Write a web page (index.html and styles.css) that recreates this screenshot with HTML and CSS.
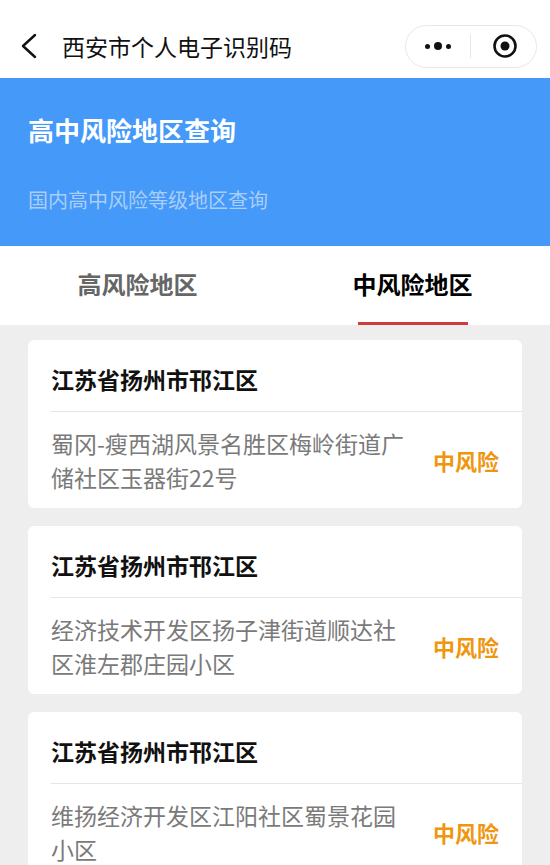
FILE: index.html
```html
<!DOCTYPE html>
<html lang="zh-CN">
<head>
    <meta charset="UTF-8">
    <meta name="viewport" content="width=device-width, initial-scale=1.0">
    <title>高中风险地区查询 - 西安市个人电子识别码</title>
    <link rel="stylesheet" href="styles.css">
</head>
<body>
    <!-- Mini program nav bar -->
    <div class="navbar">
        <svg class="back" width="20" height="30" viewBox="0 0 20 30">
            <polyline points="15,4 3,15 15,26" fill="none" stroke="#111" stroke-width="2.4" stroke-linecap="round" stroke-linejoin="round"/>
        </svg>
        <div class="nav-title">西安市个人电子识别码</div>
        <div class="capsule">
            <div class="more">
                <span class="dot"></span><span class="dot big"></span><span class="dot"></span>
            </div>
            <div class="capsule-line"></div>
            <svg class="close" width="26" height="26" viewBox="0 0 26 26">
                <circle cx="13" cy="13" r="10.5" fill="none" stroke="#111" stroke-width="2.6"/>
                <circle cx="13" cy="13" r="4.5" fill="#111"/>
            </svg>
        </div>
    </div>

    <!-- Header -->
    <div class="banner">
        <h1>高中风险地区查询</h1>
        <p>国内高中风险等级地区查询</p>
    </div>

    <!-- Tabs -->
    <div class="tabs">
        <div class="tab">高风险地区</div>
        <div class="tab active">中风险地区</div>
    </div>

    <!-- Area list -->
    <div class="list">
        <div class="card">
            <div class="card-title">江苏省扬州市邗江区</div>
            <div class="card-body">
                <div class="addr">蜀冈-瘦西湖风景名胜区梅岭街道广储社区玉器街22号</div>
                <div class="level">中风险</div>
            </div>
        </div>
        <div class="card">
            <div class="card-title">江苏省扬州市邗江区</div>
            <div class="card-body">
                <div class="addr">经济技术开发区扬子津街道顺达社区淮左郡庄园小区</div>
                <div class="level">中风险</div>
            </div>
        </div>
        <div class="card">
            <div class="card-title">江苏省扬州市邗江区</div>
            <div class="card-body">
                <div class="addr">维扬经济开发区江阳社区蜀景花园小区</div>
                <div class="level">中风险</div>
            </div>
        </div>
    </div>
</body>
</html>
```

FILE: styles.css
```css
body {
    margin: 0;
    padding: 0;
    font-family: "Noto Sans CJK SC", "Noto Sans", sans-serif;
    background-color: #eeeeee;
    overflow: hidden;
}

/* Nav bar */
.navbar {
    height: 78px;
    background-color: #fff;
    display: flex;
    align-items: center;
    padding: 14px 13px 0 20px;
    box-sizing: border-box;
}

.nav-title {
    flex: 1;
    margin-left: 22px;
    font-size: 23px;
    line-height: 30px;
    color: #111;
}

.capsule {
    width: 132px;
    height: 43px;
    box-sizing: border-box;
    border: 1px solid #e8e8e8;
    border-radius: 22px;
    display: flex;
    align-items: center;
}

.more {
    width: 64px;
    display: flex;
    align-items: center;
    justify-content: center;
    gap: 4px;
}

.dot {
    width: 5px;
    height: 5px;
    border-radius: 50%;
    background-color: #111;
}

.dot.big {
    width: 8px;
    height: 8px;
}

.capsule-line {
    width: 1px;
    height: 24px;
    background-color: #e6e6e6;
}

.close {
    margin-left: 21px;
}

/* Banner */
.banner {
    height: 168px;
    background-color: #4499f9;
    padding: 36px 28px 0;
    box-sizing: border-box;
}

.banner h1 {
    margin: 0;
    font-size: 26px;
    line-height: 32px;
    color: #fff;
    font-weight: bold;
}

.banner p {
    margin: 40px 0 0;
    font-size: 20px;
    line-height: 28px;
    color: #a9cef9;
}

/* Tabs */
.tabs {
    height: 79px;
    background-color: #fff;
    display: flex;
}

.tab {
    flex: 1;
    display: flex;
    justify-content: center;
    align-items: center;
    font-size: 24px;
    font-weight: bold;
    color: #666;
    position: relative;
    padding-bottom: 4px;
}

.tab.active {
    color: #000;
}

.tab.active::after {
    content: "";
    position: absolute;
    bottom: 0;
    left: 50%;
    width: 110px;
    margin-left: -55px;
    height: 3px;
    background-color: #d23b3b;
}

/* Cards */
.list {
    padding: 15px 28px;
    display: flex;
    flex-direction: column;
    gap: 18px;
}

.card {
    background-color: #fff;
    border-radius: 6px;
    padding-left: 23px;
    height: 168px;
    box-sizing: border-box;
}

.card-title {
    padding: 24px 0 17px;
    font-size: 23px;
    line-height: 30px;
    font-weight: bold;
    color: #111;
    border-bottom: 1px solid #e6e6e6;
}

.card-body {
    display: flex;
    align-items: center;
    padding: 14px 23px 14px 0;
    gap: 21px;
}

.addr {
    flex: 1;
    font-size: 23px;
    line-height: 34px;
    color: #7a7a7a;
}

.level {
    font-size: 22px;
    font-weight: bold;
    color: #f0960e;
    white-space: nowrap;
}
```
